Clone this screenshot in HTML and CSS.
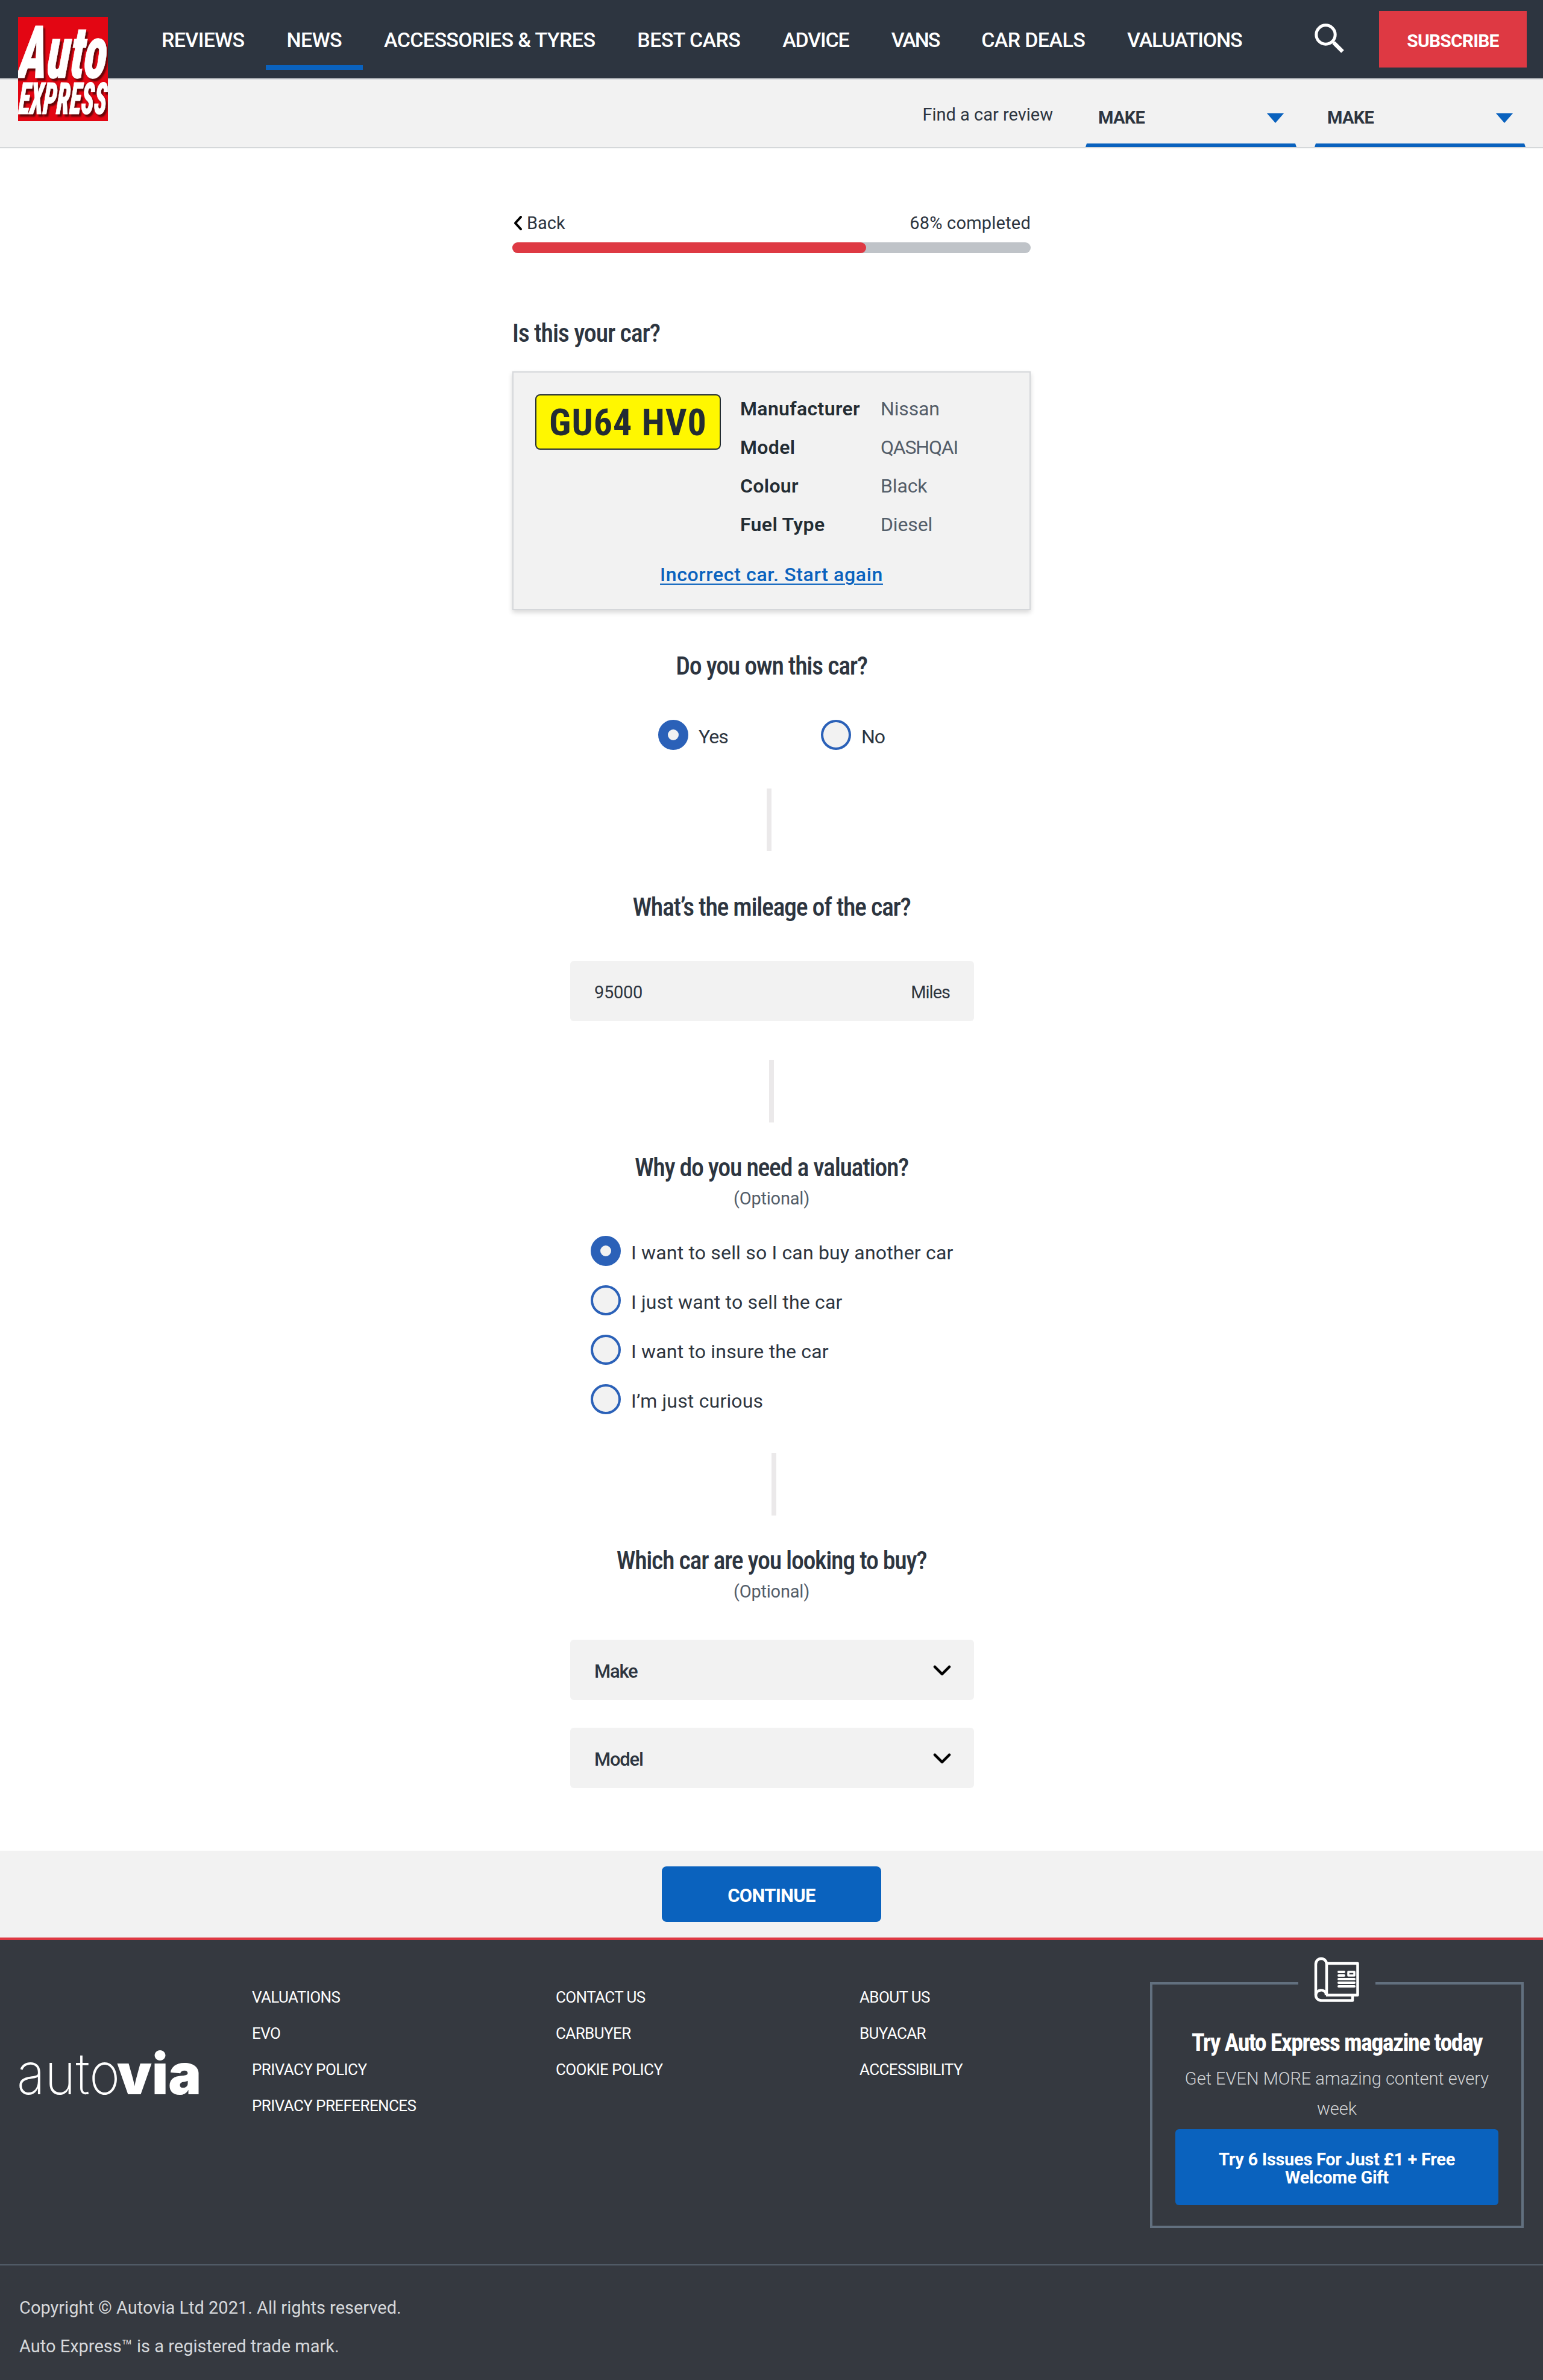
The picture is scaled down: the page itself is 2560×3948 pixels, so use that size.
FILE: index.html
```
<!DOCTYPE html>
<html lang="en">
<head>
<meta charset="utf-8">
<title>Car valuation | Auto Express</title>
<link rel="stylesheet" href="styles.css">
</head>
<body>
<header class="header">
  <a class="logo" href="#" aria-label="Auto Express">
    <svg width="149" height="173" viewBox="0 0 149 173">
      <rect width="149" height="173" fill="#e30613"/>
      <g class="logo-text">
        <text transform="translate(0 101) skewX(-4)" font-size="121" textLength="146" lengthAdjust="spacingAndGlyphs">Auto</text>
        <text transform="translate(0 161) skewX(-4)" font-size="73" textLength="146" lengthAdjust="spacingAndGlyphs">EXPRESS</text>
      </g>
    </svg>
  </a>
  <div class="topbar">
    <nav class="nav">
      <a href="#">REVIEWS</a>
      <a href="#" class="active">NEWS</a>
      <a href="#">ACCESSORIES &amp; TYRES</a>
      <a href="#">BEST CARS</a>
      <a href="#" class="tight">ADVICE</a>
      <a href="#" class="tighter">VANS</a>
      <a href="#">CAR DEALS</a>
      <a href="#" class="tight">VALUATIONS</a>
    </nav>
    <svg class="search" width="50" height="50" viewBox="0 0 50 50" fill="none" stroke="#fff">
      <circle cx="18.5" cy="18.5" r="15.7" stroke-width="5"/>
      <path d="M29 29l3.500 3.500" stroke-width="5"/>
      <path d="M32 32L46.500 46.500" stroke-width="6.500"/>
    </svg>
    <a class="subscribe" href="#">SUBSCRIBE</a>
  </div>
  <div class="subbar">
    <span class="find">Find a car review</span>
    <div class="make">MAKE<i class="tri"></i></div>
    <div class="make">MAKE<i class="tri"></i></div>
  </div>
</header>

<main class="main">
  <div class="progress-head">
    <a class="back" href="#"><svg width="14" height="24" viewBox="0 0 14 24" fill="none" stroke="#000" stroke-width="4" stroke-linecap="round" stroke-linejoin="round"><path d="M12 2L3 12l9 10"/></svg>Back</a>
    <span class="done">68% completed</span>
  </div>
  <div class="bar"><div class="fill" style="width:68.2%"></div></div>

  <h2 class="q q-left">Is this your car?</h2>
  <section class="card">
    <div class="car">
      <div class="plate">GU64 HV0</div>
      <dl class="specs">
        <dt>Manufacturer</dt><dd>Nissan</dd>
        <dt>Model</dt><dd class="caps">QASHQAI</dd>
        <dt>Colour</dt><dd>Black</dd>
        <dt>Fuel Type</dt><dd>Diesel</dd>
      </dl>
    </div>
    <a class="again" href="#">Incorrect car. Start again</a>
  </section>

  <h2 class="q q-own">Do you own this car?</h2>
  <div class="radios-row">
    <label class="radio"><i class="dot on"></i><span class="short">Yes</span></label>
    <label class="radio"><i class="dot"></i><span class="short">No</span></label>
  </div>

  <div class="divider d1"></div>
  <h2 class="q q-mileage">What’s the mileage of the car?</h2>
  <div class="field mileage"><span>95000</span><span class="unit">Miles</span></div>

  <div class="divider d2"></div>
  <h2 class="q q-why">Why do you need a valuation?</h2>
  <p class="optional">(Optional)</p>
  <div class="radios">
    <label class="radio"><i class="dot on"></i><span>I want to sell so I can buy another car</span></label>
    <label class="radio"><i class="dot"></i><span>I just want to sell the car</span></label>
    <label class="radio"><i class="dot"></i><span>I want to insure the car</span></label>
    <label class="radio"><i class="dot"></i><span>I’m just curious</span></label>
  </div>

  <div class="divider d3"></div>
  <h2 class="q q-why">Which car are you looking to buy?</h2>
  <p class="optional">(Optional)</p>
  <div class="selects">
    <div class="field select"><span>Make</span><svg width="30" height="18" viewBox="0 0 30 18" fill="none" stroke="#000" stroke-width="4.500" stroke-linecap="round" stroke-linejoin="round"><path d="M3 3l12 12L27 3"/></svg></div>
    <div class="field select"><span>Model</span><svg width="30" height="18" viewBox="0 0 30 18" fill="none" stroke="#000" stroke-width="4.500" stroke-linecap="round" stroke-linejoin="round"><path d="M3 3l12 12L27 3"/></svg></div>
  </div>
</main>

<div class="action"><button class="continue">CONTINUE</button></div>

<footer class="footer">
  <div class="footer-top">
    <svg class="autovia" width="304" height="78" viewBox="0 0 304 78" fill="#fff">
      <text x="-3" y="74" font-size="95" textLength="171" lengthAdjust="spacingAndGlyphs"><tspan font-weight="250">auto</tspan></text>
      <text x="163" y="74" font-size="94" font-weight="900" textLength="140" lengthAdjust="spacingAndGlyphs">via</text>
    </svg>
    <ul class="links">
      <li>VALUATIONS</li><li>EVO</li><li>PRIVACY POLICY</li><li>PRIVACY PREFERENCES</li>
    </ul>
    <ul class="links">
      <li>CONTACT US</li><li>CARBUYER</li><li>COOKIE POLICY</li>
    </ul>
    <ul class="links">
      <li>ABOUT US</li><li>BUYACAR</li><li>ACCESSIBILITY</li>
    </ul>
    <section class="promo">
      <div class="mag">
        <svg width="76" height="76" viewBox="0 0 76 76" fill="none" stroke="#fff" stroke-width="4.500" stroke-linejoin="round">
          <path d="M3 63V12a9 9 0 0 1 18 0v51M21 11h51.500v52.500H20"/>
          <path d="M3 63a9 9 0 0 1 17-2.500V63.500M3 63c0 6 4 9.500 10 9.500h51V64"/>
          <path d="M41 25h9M41 31h9M41 37h26M41 43h26M41 49h26" stroke-width="4" stroke-linecap="round"/>
          <rect x="57" y="25" width="10" height="6" stroke-width="3.500"/>
        </svg>
      </div>
      <h3>Try Auto Express magazine today</h3>
      <p>Get EVEN MORE amazing content every week</p>
      <a class="offer" href="#">Try 6 Issues For Just £1 + Free<br>Welcome Gift</a>
    </section>
  </div>
  <div class="legal">
    <p>Copyright © Autovia Ltd 2021. All rights reserved.</p>
    <p>Auto Express™ is a registered trade mark.</p>
  </div>
</footer>
</body>
</html>
```
FILE: styles.css
```
* { box-sizing: border-box; }
body, h2, h3, p, ul, dl, dt, dd { margin: 0; padding: 0; }
body { font-family: Roboto, sans-serif; color: #2d3540; background: #fff; }
a { color: inherit; text-decoration: none; }

/* header */
.header { position: relative; height: 246px; }
.logo { position: absolute; left: 30px; top: 28px; height: 173px; z-index: 2; }
.logo svg { display: block; }
.logo text { font-family: Roboto, sans-serif; font-weight: 900; font-style: italic; font-stretch: 75%; }
.logo-text { fill: #fff; stroke: #fff; stroke-width: 1; filter: drop-shadow(3px 4px 1px rgba(70, 5, 5, .8)); }
.topbar { display: flex; align-items: flex-start; height: 130px; padding-left: 233px; background: #2d3540; color: #fff; }
.nav { display: flex; flex: 1; }
.nav a { height: 116px; padding: 0 35px; font-size: 34px; font-weight: 500; line-height: 132px; letter-spacing: -.62px; white-space: nowrap; }
.nav .active { box-shadow: inset 0 -8px #0a62be; }
.nav .tight { letter-spacing: -1.15px; }
.nav .tighter { letter-spacing: -2.1px; }
.search { margin: 39px 57px 0 0; }
.subscribe { width: 245px; height: 94px; margin: 18px 27px 0 0; background: #de3943; font-size: 30px; font-weight: 700; line-height: 100px; letter-spacing: -.8px; text-align: center; }
.subbar { display: flex; justify-content: flex-end; height: 116px; padding-right: 29px; border: solid #d5d8da; border-width: 2px 0; background: #f2f2f2; }
.find { margin-right: 54px; font-size: 29px; line-height: 116px; }
.make { display: flex; justify-content: space-between; width: 350px; height: 112px; margin-left: 30px; padding: 0 19px; border: solid transparent; border-width: 0 2px; border-bottom: 6px solid #0a62be; font-size: 29px; font-weight: 700; line-height: 127px; letter-spacing: -.7px; }
.find + .make { margin-left: 0; }
.tri { margin-top: 56px; width: 28px; height: 16px; background: #0a62be; clip-path: polygon(0 0, 100% 0, 50% 100%); }

/* valuation form */
.main { width: 860px; height: 2824px; margin: 0 auto; padding-top: 104px; }
.progress-head { display: flex; justify-content: space-between; font-size: 29px; line-height: 40px; }
.back { display: flex; align-items: center; gap: 8px; padding-left: 2px; }
.done { letter-spacing: .2px; }
.bar { height: 18px; margin-top: 12px; border-radius: 9px; background: #bfc3c8; }
.fill { height: 18px; border-radius: 9px; background: #de3943; }
.q { font-size: 42px; font-weight: 500; font-stretch: 75%; line-height: 60px; letter-spacing: -1.36px; text-align: center; white-space: nowrap; }
.q-left { margin: 103px 0 33px; letter-spacing: -1.2px; text-align: left; }
.card { height: 396px; padding: 36px; border: 2px solid #d5d7da; background: #f2f2f2; box-shadow: 0 4px 8px rgba(0, 0, 0, .16); }
.car { display: flex; gap: 32px; }
.plate { width: 308px; height: 92px; border: 2px solid #232c33; border-radius: 8px; background: #fff700; color: #232c33; font-size: 62px; font-weight: 700; font-stretch: 75%; line-height: 90px; letter-spacing: 1px; text-align: center; white-space: nowrap; }
.specs { display: grid; grid-template-columns: 233px auto; margin-top: -8px; font-size: 32px; line-height: 64px; }
.specs dt { color: #232c33; font-weight: 600; letter-spacing: .35px; }
.specs dd { color: #535d69; letter-spacing: -.15px; }
.specs .caps { letter-spacing: -1.2px; }
.again { display: block; margin-top: 19px; color: #0a62be; font-size: 32px; font-weight: 500; line-height: 64px; letter-spacing: .65px; text-align: center; text-decoration: underline; text-decoration-thickness: 2px; text-underline-offset: 4px; }
.q-own { margin-top: 63px; }
.radio { display: flex; height: 50px; font-size: 32px; line-height: 57px; letter-spacing: .18px; white-space: nowrap; }
.dot { width: 50px; height: 50px; margin-right: 17px; border: 4px solid #2b61b8; border-radius: 50%; background: #f2f2f2; }
.dot.on { border-width: 16px; }
.short { letter-spacing: -1px; }
.radios-row { display: grid; grid-template-columns: 270px auto; margin: 59px 0 0 242px; }
.divider { width: 8px; height: 104px; margin-top: 64px; background: #ebe9ea; }
.d1 { margin-left: 422px; }
.d2 { margin-left: 426px; }
.d3 { margin-left: 430px; }
.q-mileage { margin: 63px 0 59px; }
.field { display: flex; justify-content: space-between; align-items: center; width: 670px; height: 100px; margin-left: 96px; padding: 0 40px; border-radius: 6px; background: #f2f2f2; }
.mileage { padding-top: 4px; font-size: 29px; letter-spacing: -.3px; }
.unit { letter-spacing: -1px; }
.q-why { margin: 45px 0 1px; }
.optional { color: #535d69; font-size: 29px; line-height: 40px; letter-spacing: -.2px; text-align: center; }
.radios { display: grid; row-gap: 32px; margin: 42px 0 0 130px; }
.selects { display: grid; row-gap: 46px; margin-top: 60px; }
.select { padding: 5px 38px 0 40px; font-size: 31px; font-weight: 500; letter-spacing: -1.2px; }
.select svg { margin-top: -3px; }

.action { height: 148px; padding-top: 26px; border-bottom: 4px solid #de3943; background: #f2f2f2; text-align: center; }
.continue { width: 364px; height: 92px; padding: 4px 0 0; border: 0; border-radius: 8px; background: #0a62be; color: #fff; font: 700 31px Roboto, sans-serif; letter-spacing: -.7px; }

/* footer */
.footer { height: 730px; background: #353940; color: #fff; }
.footer-top { display: grid; grid-template-columns: 387px 504px 504px 482px 620px; align-items: start; height: 540px; padding-left: 31px; border-bottom: 2px solid #535d6a; }
.autovia { margin-top: 182px; overflow: visible; }
.autovia text { font-family: Inter, sans-serif; }
.links { margin-top: 65px; list-style: none; font-size: 26px; line-height: 60px; letter-spacing: -.6px; }
.promo { height: 408px; margin-top: 70px; padding: 0 38px; border: 4px solid #62707f; text-align: center; }
.mag { width: 128px; height: 76px; margin: -46px auto 0; background: #353940; }
.mag svg { display: block; margin: 0 auto; }
.promo h3 { margin-top: 37px; font-size: 40px; font-weight: 700; font-stretch: 75%; line-height: 60px; letter-spacing: -1.6px; white-space: nowrap; }
.promo p { margin-top: 4px; color: #d0d3d6; font-size: 29px; font-weight: 300; line-height: 50px; }
.offer { display: block; height: 126px; margin-top: 9px; padding-top: 35px; border-radius: 6px; background: #0a62be; font-size: 29px; font-weight: 700; line-height: 30px; letter-spacing: -.3px; }
.legal { padding: 38px 0 0 32px; color: #d5d8db; font-size: 29px; line-height: 64px; }
```
